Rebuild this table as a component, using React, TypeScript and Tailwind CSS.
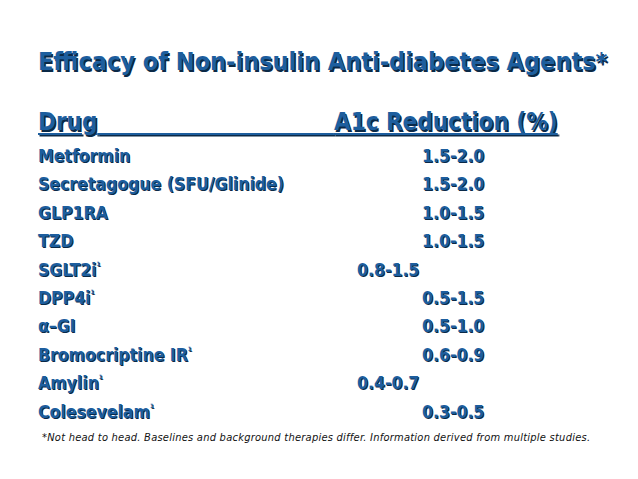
const ROWS: { name: string; sup?: boolean; value: string; early?: boolean }[] = [
  { name: 'Metformin', value: '1.5-2.0' },
  { name: 'Secretagogue (SFU/Glinide)', value: '1.5-2.0' },
  { name: 'GLP1RA', value: '1.0-1.5' },
  { name: 'TZD', value: '1.0-1.5' },
  { name: 'SGLT2i', sup: true, value: '0.8-1.5', early: true },
  { name: 'DPP4i', sup: true, value: '0.5-1.5' },
  { name: 'α–GI', value: '0.5-1.0' },
  { name: 'Bromocriptine IR', sup: true, value: '0.6-0.9' },
  { name: 'Amylin', sup: true, value: '0.4-0.7', early: true },
  { name: 'Colesevelam', sup: true, value: '0.3-0.5' },
];

export default function App() {
  return (
    <div className="w-[638px] h-[479px] overflow-hidden bg-white pl-[38px] pt-[47px] font-['DejaVu_Sans_Condensed','DejaVu_Sans',sans-serif] [font-stretch:condensed]">
      {/* title */}
      <h1 className="text-[25px] leading-[29px] font-bold text-[#1d5e9e] [text-shadow:1.5px_1.5px_0_#0a2947] whitespace-nowrap">
        Efficacy of Non-insulin Anti-diabetes Agents*
      </h1>

      {/* column header */}
      <div className="mt-[33px] text-[24px] leading-[27px] font-bold text-[#1d5e9e] [text-shadow:1.5px_1.5px_0_#0a2947]">
        <span className="underline decoration-2 underline-offset-[3px] whitespace-pre">
          Drug<span className="tracking-[229px]"> </span>A1c Reduction (%)
        </span>
      </div>

      {/* rows */}
      <div className="mt-[6px] flex flex-col text-[17.5px] leading-[28.4px] font-bold text-[#1d5e9e] [text-shadow:1px_1px_0_#0a2947]">
        {ROWS.map((r) => (
          <div key={r.name} className="flex">
            <div className="w-[319px] whitespace-nowrap">
              {r.name}
              {r.sup && <sup className="text-[6px] align-super">1</sup>}
            </div>
            <div className={r.early ? '' : 'pl-[65px]'}>{r.value}</div>
          </div>
        ))}
      </div>

      {/* footnote */}
      <p className="mt-[5px] pl-[4px] text-[11px] leading-[14px] italic tracking-[0.25px] text-[#111] whitespace-nowrap">
        *Not head to head. Baselines and background therapies differ. Information derived from multiple studies.
      </p>
    </div>
  );
}
